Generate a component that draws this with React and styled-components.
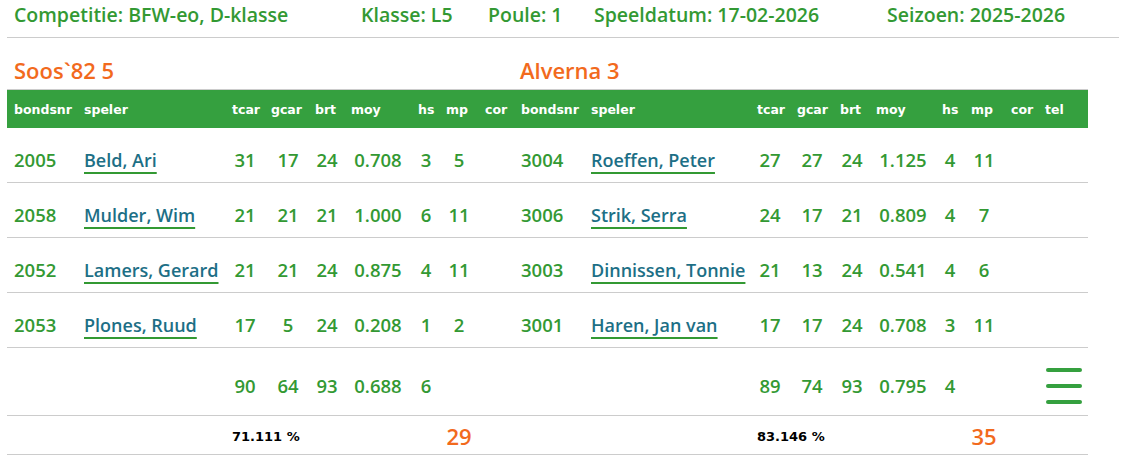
import React from 'react';
import styled, { createGlobalStyle } from 'styled-components';

const GREEN = '#35a03f';
const TEXT_GREEN = '#339933';
const LINK = '#1d6f86';
const ORANGE = '#f26a1d';
const LINE = '#cccccc';

const GlobalStyle = createGlobalStyle`
  body {
    margin: 0;
    background: #fff;
    font-family: "Open Sans", "DejaVu Sans Condensed", sans-serif;
    font-weight: 600;
  }
`;

const Page = styled.div`
  width: 1132px;
  padding: 0 13px 0 7px;
  box-sizing: border-box;
`;

const InfoBar = styled.div`
  display: grid;
  grid-template-columns: 347px 127px 106px 293px 1fr;
  padding: 2px 0 0 7px;
  height: 35px;
  border-bottom: 1px solid ${LINE};
  font-size: 19.5px;
  color: ${TEXT_GREEN};
  line-height: 26px;
`;

const Teams = styled.div`
  display: grid;
  grid-template-columns: 506px 1fr;
  padding: 18px 0 0 7px;
  height: 33px;
  font-size: 22px;
  color: ${ORANGE};
  line-height: 28px;
`;

const Table = styled.div`
  width: 1081px;
`;

const HeadRow = styled.div`
  display: grid;
  grid-template-columns: 70px 148px 39px 44px 36px 67px 28px 39px 36px 70px 166px 40px 43px 36px 66px 29px 40px 34px 1fr;
  padding-left: 7px;
  height: 39px;
  box-sizing: border-box;
  align-items: center;
  background: ${GREEN};
  border-top: 1px solid ${LINE};
  color: #fff;
  font-family: "DejaVu Sans", sans-serif;
  font-weight: bold;
  font-size: 12.5px;
`;

const COLS = '70px 149px 38px 48px 30px 72px 24px 42px 34px 70px 166px 40px 44px 36px 66px 28px 40px 1fr';

const Row = styled.div`
  display: grid;
  grid-template-columns: ${COLS};
  height: ${p => p.$h}px;
  box-sizing: border-box;
  padding-top: ${p => p.$top || 0}px;
  align-items: center;
  border-bottom: 1px solid ${LINE};
  font-size: 18.5px;
  color: ${TEXT_GREEN};
`;

const Cell = styled.div`
  text-align: ${p => p.$align || 'center'};
  padding-left: ${p => p.$pad || 0}px;
  grid-column: ${p => p.$span ? `span ${p.$span}` : 'auto'};
  white-space: nowrap;
`;

const PlayerLink = styled.a`
  color: ${LINK};
  font-size: 18px;
  text-decoration: underline;
  text-decoration-color: ${TEXT_GREEN};
  text-decoration-thickness: 2px;
  text-underline-offset: 5px;
  cursor: pointer;
`;

const Percent = styled(Cell)`
  color: #000;
  font-family: "DejaVu Sans", sans-serif;
  font-weight: bold;
  font-size: 13px;
`;

const Score = styled(Cell)`
  color: ${ORANGE};
  font-size: 22px;
`;

const Menu = styled.div`
  display: flex;
  flex-direction: column;
  gap: 12px;
  width: 36px;
  margin-left: 42px;
  span {
    display: block;
    height: 4px;
    border-radius: 2px;
    background: ${GREEN};
  }
`;

const heads = ['bondsnr', 'speler', 'tcar', 'gcar', 'brt', 'moy', 'hs', 'mp', 'cor',
  'bondsnr', 'speler', 'tcar', 'gcar', 'brt', 'moy', 'hs', 'mp', 'cor', 'tel'];

const rows = [
  [['2005', 'Beld, Ari', 31, 17, 24, '0.708', 3, 5], ['3004', 'Roeffen, Peter', 27, 27, 24, '1.125', 4, 11]],
  [['2058', 'Mulder, Wim', 21, 21, 21, '1.000', 6, 11], ['3006', 'Strik, Serra', 24, 17, 21, '0.809', 4, 7]],
  [['2052', 'Lamers, Gerard', 21, 21, 24, '0.875', 4, 11], ['3003', 'Dinnissen, Tonnie', 21, 13, 24, '0.541', 4, 6]],
  [['2053', 'Plones, Ruud', 17, 5, 24, '0.208', 1, 2], ['3001', 'Haren, Jan van', 17, 17, 24, '0.708', 3, 11]],
];

const Side = ({ p }) => (
  <>
    <Cell $align="left" $pad={7}>{p[0]}</Cell>
    <Cell $align="left" $pad={7}><PlayerLink>{p[1]}</PlayerLink></Cell>
    {p.slice(2).map((v, i) => <Cell key={i}>{v}</Cell>)}
    <Cell />
  </>
);

export default function App() {
  return (
    <Page>
      <GlobalStyle />
      <InfoBar>
        <div>Competitie: BFW-eo, D-klasse</div>
        <div>Klasse: L5</div>
        <div>Poule: 1</div>
        <div>Speeldatum: 17-02-2026</div>
        <div>Seizoen: 2025-2026</div>
      </InfoBar>
      <Teams>
        <div>Soos`82 5</div>
        <div>Alverna 3</div>
      </Teams>
      <Table>
        <HeadRow>
          {heads.map((h, i) => <div key={i}>{h}</div>)}
        </HeadRow>
        {rows.map((r, i) => (
          <Row key={i} $h={55} $top={8}>
            <Side p={r[0]} />
            <Side p={r[1]} />
          </Row>
        ))}
        <Row $h={68} $top={8}>
          <Cell $span={2} />
          <Cell>90</Cell><Cell>64</Cell><Cell>93</Cell><Cell>0.688</Cell><Cell>6</Cell>
          <Cell $span={4} />
          <Cell>89</Cell><Cell>74</Cell><Cell>93</Cell><Cell>0.795</Cell><Cell>4</Cell>
          <Cell />
          <Cell><Menu><span /><span /><span /></Menu></Cell>
        </Row>
        <Row $h={39} $top={2}>
          <Cell $span={2} />
          <Percent $span={2} $align="left" $pad={6}>71.111 %</Percent>
          <Cell $span={3} />
          <Score>29</Score>
          <Cell $span={3} />
          <Percent $span={2} $align="left" $pad={7}>83.146 %</Percent>
          <Cell $span={3} />
          <Score>35</Score>
        </Row>
      </Table>
    </Page>
  );
}
